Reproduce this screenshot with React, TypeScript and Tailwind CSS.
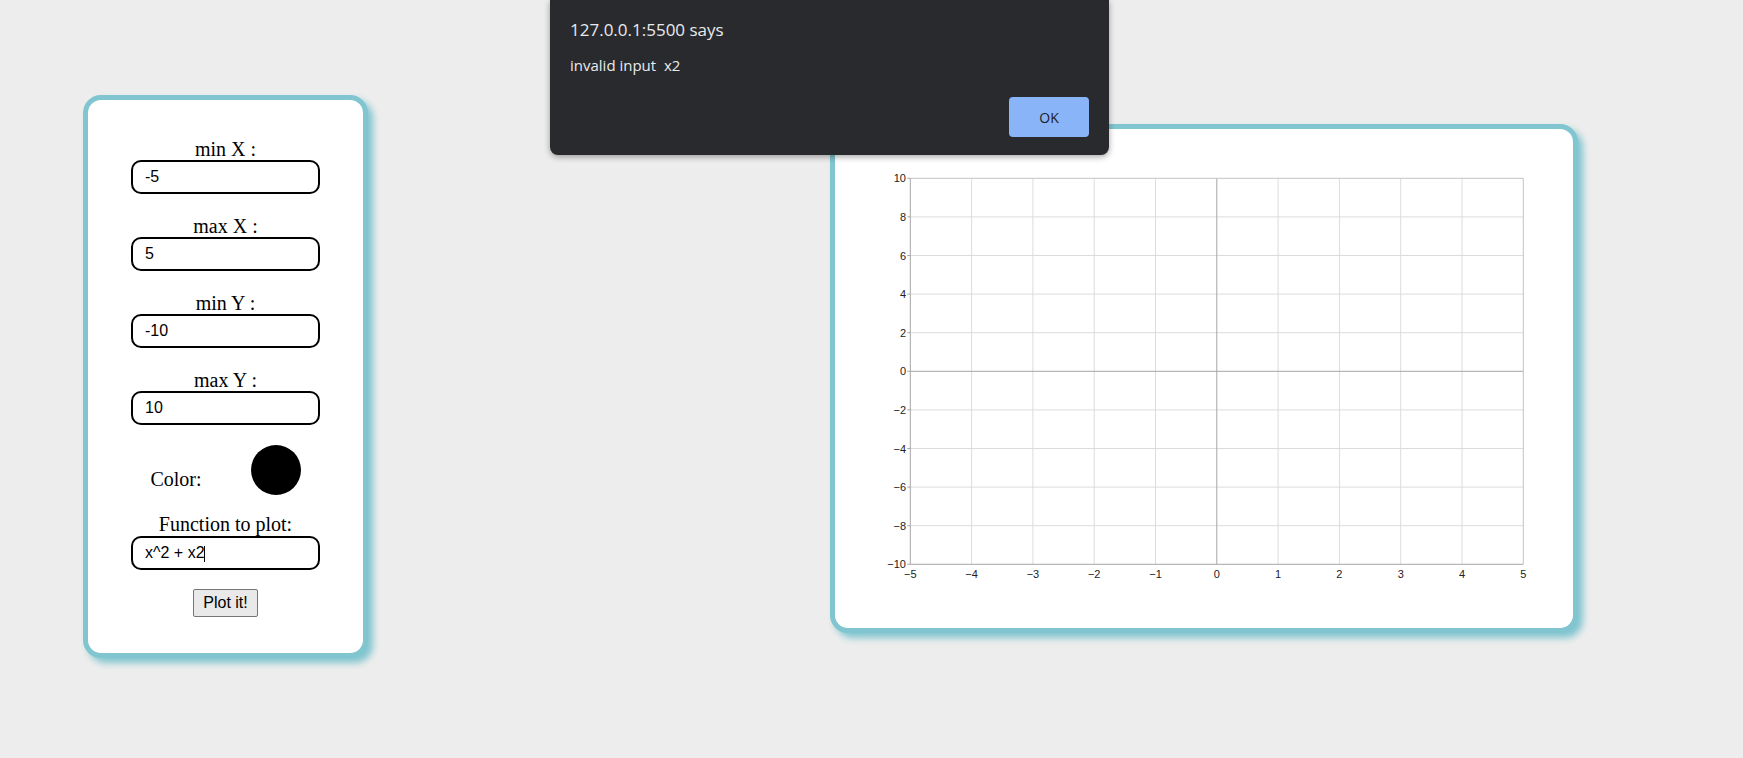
import React from 'react';

const fields = [
  { label: 'min X :', value: '-5' },
  { label: 'max X :', value: '5' },
  { label: 'min Y :', value: '-10' },
  { label: 'max Y :', value: '10' },
];

const xTicks = [-5, -4, -3, -2, -1, 0, 1, 2, 3, 4, 5];
const yTicks = [-10, -8, -6, -4, -2, 0, 2, 4, 6, 8, 10];

const px = (v: number) => 75.3 + (v + 5) * 61.3;
const py = (v: number) => 49.3 + (10 - v) * 19.3;
const fmt = (v: number) => (v < 0 ? `\u2212${-v}` : `${v}`);

const Field: React.FC<{ label: string; value: string; first?: boolean }> = ({ label, value, first }) => {
  return <div className={first ? 'flex flex-col items-center' : 'flex flex-col items-center mt-[21px]'}>
      <label className="text-[20px] leading-[22px] text-black">{label}</label>
      <input type="text" readOnly defaultValue={value} className="w-[189px] h-[34px] border-2 border-black rounded-[10px] pl-3 text-[16px] text-black bg-white outline-none font-['Liberation_Sans',Arial,sans-serif]" />
    </div>;
};

const Chart = () => {
  return <svg width={738} height={499} className="block">
      {xTicks.filter(v => v !== -5 && v !== 5 && v !== 0).map(v => <line key={`gx${v}`} x1={px(v)} x2={px(v)} y1={py(10)} y2={py(-10)} stroke="#dcdcdc" strokeWidth={1} />)}
      {yTicks.filter(v => v !== -10 && v !== 10 && v !== 0).map(v => <line key={`gy${v}`} x1={px(-5)} x2={px(5)} y1={py(v)} y2={py(v)} stroke="#dcdcdc" strokeWidth={1} />)}
      <line x1={px(0)} x2={px(0)} y1={py(10)} y2={py(-10)} stroke="#a6a6a6" strokeWidth={1} />
      <line x1={px(-5)} x2={px(5)} y1={py(0)} y2={py(0)} stroke="#a6a6a6" strokeWidth={1} />
      <line x1={px(-5)} x2={px(5)} y1={py(10)} y2={py(10)} stroke="#c4c4c4" strokeWidth={1} />
      <line x1={px(5)} x2={px(5)} y1={py(10)} y2={py(-10)} stroke="#c4c4c4" strokeWidth={1} />
      <line x1={px(-5)} x2={px(-5)} y1={py(10)} y2={py(-10)} stroke="#a6a6a6" strokeWidth={1} />
      <line x1={px(-5)} x2={px(5)} y1={py(-10)} y2={py(-10)} stroke="#a6a6a6" strokeWidth={1} />
      {yTicks.map(v => <g key={`ly${v}`}>
          <line x1={px(-5) - 3} x2={px(-5)} y1={py(v)} y2={py(v)} stroke="#a6a6a6" strokeWidth={1} />
          <text x={71} y={py(v) + 4} textAnchor="end" fontSize={11} fill="#222" fontFamily="'Liberation Sans', Arial, sans-serif">{fmt(v)}</text>
        </g>)}
      {xTicks.map(v => <text key={`lx${v}`} x={px(v)} y={448.5} textAnchor="middle" fontSize={11} fill="#222" fontFamily="'Liberation Sans', Arial, sans-serif">{fmt(v)}</text>)}
    </svg>;
};

export default function App() {
  return <div className="relative min-h-[758px] w-full bg-[#ededed] flex items-start pl-[83px] gap-[462px] font-['Liberation_Serif','Times_New_Roman',serif] overflow-hidden">
      {/* controls */}
      <div className="mt-[95px] w-[285px] h-[563px] shrink-0 bg-white border-[5px] border-[#80c5cf] rounded-[18px] shadow-[5px_5px_7px_#80c5cf] pt-[38px] flex flex-col items-center">
        {fields.map((f, i) => <Field key={f.label} label={f.label} value={f.value} first={i === 0} />)}

        <div className="mt-[20px] flex items-end gap-[49px]">
          <span className="text-[20px] leading-[22px] mb-[5px] text-black">Color:</span>
          <div className="w-[50px] h-[50px] rounded-full bg-black" />
        </div>

        <div className="mt-[18px] flex flex-col items-center">
          <label className="text-[20px] leading-[22px] text-black">Function to plot:</label>
          <div className="relative mt-[1px]">
            <input type="text" readOnly defaultValue="x^2 + x2" className="w-[189px] h-[34px] border-2 border-black rounded-[10px] pl-3 text-[16px] text-black bg-white outline-none font-['Liberation_Sans',Arial,sans-serif]" />
            <span className="absolute left-[73px] top-[10px] w-px h-[16px] bg-black" />
          </div>
        </div>

        <button className="mt-[19px] h-[28px] px-[9px] bg-[#e9e9e9] border border-[#767676] rounded-[2px] text-[16px] text-black font-['Liberation_Sans',Arial,sans-serif]">Plot it!</button>
      </div>

      {/* plot */}
      <div className="mt-[124px] w-[748px] h-[509px] shrink-0 bg-white border-[5px] border-[#80c5cf] rounded-[18px] shadow-[5px_5px_7px_#80c5cf] overflow-hidden">
        <Chart />
      </div>

      {/* browser alert */}
      <div className="absolute top-0 left-[550px] w-[559px] h-[155px] bg-[#292a2d] rounded-b-[8px] shadow-[0_2px_6px_rgba(0,0,0,0.35)] pt-[18px] px-[20px] font-['Open_Sans',sans-serif] text-[#e8eaed]">
        <div className="text-[17px] leading-[23px]">127.0.0.1:5500 says</div>
        <div className="mt-[14px] text-[15px] leading-[20px] whitespace-pre">invalid input  x2</div>
        <div className="mt-[22px] flex justify-end">
          <button className="w-[80px] h-[40px] rounded-[4px] bg-[#8ab4f8] text-[14px] text-[#202124]">OK</button>
        </div>
      </div>
    </div>;
}
